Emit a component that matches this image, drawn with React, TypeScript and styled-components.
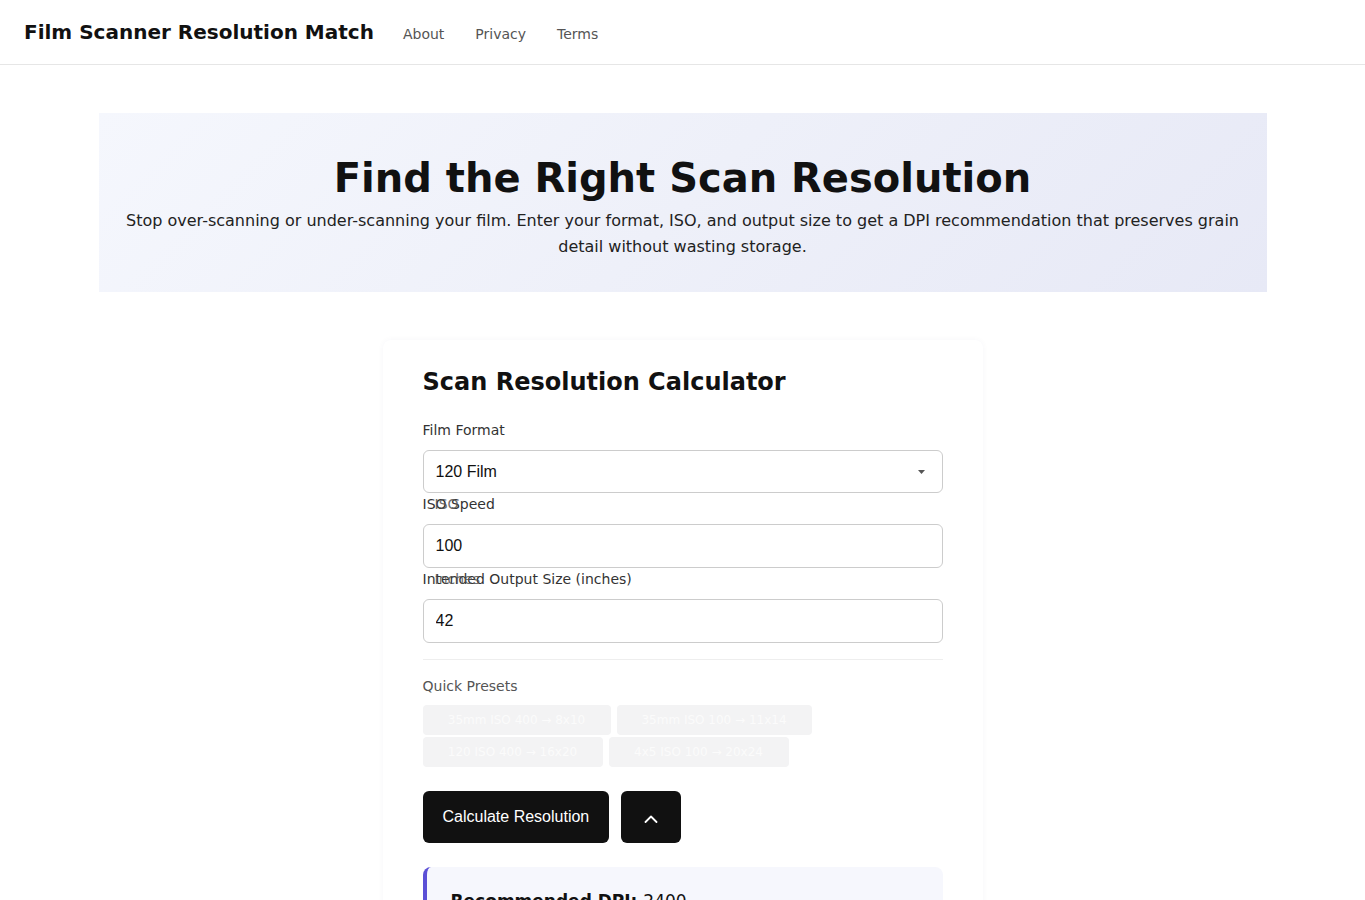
import React from "react";
import styled, { createGlobalStyle } from "styled-components";

const GlobalStyle = createGlobalStyle`
  html, body {
    margin: 0;
    padding: 0;
    background: #fff;
    font-family: "DejaVu Sans", sans-serif;
    color: #111;
  }
  * {
    box-sizing: border-box;
  }
`;

const presets = [
  [
    { label: "35mm ISO 400 → 8x10", width: 188 },
    { label: "35mm ISO 100 → 11x14", width: 195 },
  ],
  [
    { label: "120 ISO 400 → 16x20", width: 180 },
    { label: "4x5 ISO 100 → 20x24", width: 180 },
  ],
];

const App = () => {
  const [format, setFormat] = React.useState<string>("120 Film");
  const [iso, setIso] = React.useState<string>("100");
  const [size, setSize] = React.useState<string>("42");

  return (
    <>
      <GlobalStyle />
      <Header>
        <Brand>Film Scanner Resolution Match</Brand>
        <Nav>
          <NavLink href="#">About</NavLink>
          <NavLink href="#">Privacy</NavLink>
          <NavLink href="#">Terms</NavLink>
        </Nav>
      </Header>

      <Main>
        <Hero>
          <HeroTitle>Find the Right Scan Resolution</HeroTitle>
          <HeroText>
            Stop over-scanning or under-scanning your film. Enter your format,
            ISO, and output size to get a DPI recommendation that preserves
            grain detail without wasting storage.
          </HeroText>
        </Hero>

        <Card>
          <CardTitle>Scan Resolution Calculator</CardTitle>

          <Field>
            <Label>Film Format</Label>
            <SelectWrap>
              <Select value={format} onChange={(e) => setFormat(e.target.value)}>
                <option>35mm Film</option>
                <option>120 Film</option>
                <option>4x5 Sheet Film</option>
              </Select>
              <Caret width="7" height="4" viewBox="0 0 7 4">
                <path d="M0 0h7L3.5 4z" fill="#555" />
              </Caret>
            </SelectWrap>
          </Field>

          <Field>
            <Label>
              ISO Speed
              <Ghost>ISO</Ghost>
            </Label>
            <Input value={iso} onChange={(e) => setIso(e.target.value)} />
          </Field>

          <Field>
            <Label>
              Intended Output Size (inches)
              <Ghost>Inches</Ghost>
            </Label>
            <Input value={size} onChange={(e) => setSize(e.target.value)} />
          </Field>

          <Divider />

          <SubLabel>Quick Presets</SubLabel>
          <Presets>
            {presets.map((row, i) => (
              <PresetRow key={i}>
                {row.map((p) => (
                  <Preset key={p.label} w={p.width}>
                    {p.label}
                  </Preset>
                ))}
              </PresetRow>
            ))}
          </Presets>

          <Actions>
            <PrimaryButton>Calculate Resolution</PrimaryButton>
            <IconButton aria-label="Collapse">
              <svg width="14" height="8" viewBox="0 0 14 8" fill="none">
                <path
                  d="M1.5 7L7 1.5 12.5 7"
                  stroke="#fff"
                  strokeWidth="1.8"
                  strokeLinecap="round"
                  strokeLinejoin="round"
                />
              </svg>
            </IconButton>
          </Actions>

          <Result>
            <ResultTitle>
              Recommended DPI: <span>2400</span>
            </ResultTitle>
          </Result>
        </Card>
      </Main>
    </>
  );
};

export default App;

const Header = styled.header`
  height: 65px;
  display: flex;
  align-items: center;
  padding: 0 24px;
  border-bottom: 1px solid #e6e6e6;
`;

const Brand = styled.div`
  font-size: 20px;
  font-weight: 700;
  color: #111;
  margin-right: 29px;
`;

const Nav = styled.nav`
  display: flex;
  gap: 31px;
  padding-top: 3px;
`;

const NavLink = styled.a`
  font-size: 14px;
  color: #555;
  text-decoration: none;
`;

const Main = styled.main`
  max-width: 1200px;
  margin: 0 auto;
  padding: 48px 16px 0;
`;

const Hero = styled.section`
  background: linear-gradient(135deg, #f5f7fd 0%, #eef0f9 50%, #e7e9f6 100%);
  padding: 41px 24px 32px;
  text-align: center;
`;

const HeroTitle = styled.h1`
  margin: 0 0 6px;
  font-size: 40px;
  font-weight: 700;
  line-height: 48px;
  color: #111;
`;

const HeroText = styled.p`
  margin: 0;
  font-size: 16px;
  line-height: 26px;
  color: #222;
`;

const Card = styled.section`
  width: 600px;
  margin: 48px auto 0;
  padding: 24px 40px 40px;
  background: #fff;
  border-radius: 8px;
  box-shadow: 0 0 6px rgba(30, 40, 90, 0.04);
  min-height: 600px;
`;

const CardTitle = styled.h2`
  margin: 0 0 22px;
  font-size: 24px;
  font-weight: 700;
  line-height: 36px;
  color: #111;
`;

const Field = styled.div`
  display: flex;
  flex-direction: column;
  gap: 11px;
  margin-bottom: 3px;
`;

const Label = styled.label`
  position: relative;
  font-size: 14px;
  line-height: 17px;
  color: #333;
`;

const Ghost = styled.span`
  position: absolute;
  left: 12px;
  top: 0;
  color: #555;
  opacity: 0.85;
`;

const SelectWrap = styled.div`
  position: relative;
`;

const Select = styled.select`
  width: 100%;
  height: 43px;
  padding: 0 12px;
  border: 1px solid #ccc;
  border-radius: 6px;
  background: #fff;
  font-family: "Liberation Sans", Arial, sans-serif;
  font-size: 16px;
  color: #111;
  appearance: none;
  outline: none;
`;

const Caret = styled.svg`
  position: absolute;
  right: 18px;
  top: 20px;
  pointer-events: none;
`;

const Input = styled.input`
  width: 100%;
  height: 44px;
  padding: 0 12px;
  border: 1px solid #ccc;
  border-radius: 6px;
  font-family: "Liberation Sans", Arial, sans-serif;
  font-size: 16px;
  color: #111;
  outline: none;
`;

const Divider = styled.hr`
  margin: 16px 0 18px;
  border: none;
  border-top: 1px solid #eee;
`;

const SubLabel = styled.div`
  font-size: 14px;
  line-height: 17px;
  color: #555;
  margin-bottom: 10px;
`;

const Presets = styled.div`
  display: flex;
  flex-direction: column;
  gap: 2px;
`;

const PresetRow = styled.div`
  display: flex;
  gap: 6px;
`;

const Preset = styled.button<{ w: number }>`
  width: ${({ w }) => w}px;
  height: 30px;
  padding: 0 10px;
  border: none;
  border-radius: 4px;
  background: #f3f3f4;
  color: #fbfbfb;
  font-family: "DejaVu Sans", sans-serif;
  font-size: 12px;
  white-space: nowrap;
`;

const Actions = styled.div`
  display: flex;
  gap: 12px;
  margin-top: 24px;
`;

const PrimaryButton = styled.button`
  height: 52px;
  padding: 0 20px;
  border: none;
  border-radius: 6px;
  background: #111;
  color: #fff;
  font-family: "Liberation Sans", Arial, sans-serif;
  font-size: 16px;
`;

const IconButton = styled.button`
  width: 60px;
  height: 52px;
  display: flex;
  align-items: center;
  justify-content: center;
  padding-top: 4px;
  border: none;
  border-radius: 6px;
  background: #111;
`;

const Result = styled.div`
  margin-top: 24px;
  padding: 24px 24px;
  background: #f6f7fd;
  border-left: 4px solid #5b4fd6;
  border-radius: 8px;
`;

const ResultTitle = styled.div`
  font-size: 17px;
  font-weight: 700;
  color: #111;

  span {
    font-weight: 400;
  }
`;
